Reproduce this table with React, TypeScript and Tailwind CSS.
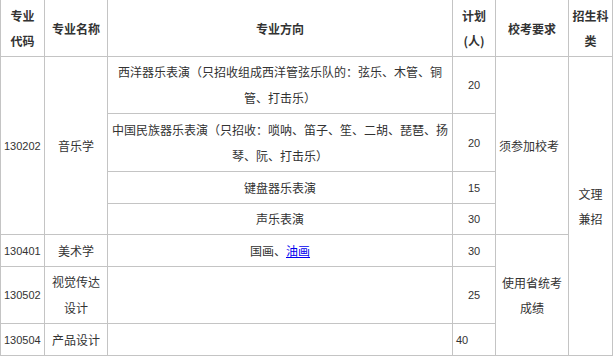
import React from 'react'

const cell = 'border border-[#c4c4c4] px-[3px] align-middle'
const num = "font-['Liberation_Sans','Noto_Sans_CJK_SC',sans-serif] text-[11px]"

const App = () => {
  return (
    <div className="w-[613px] h-[358px] overflow-hidden bg-white">
      <table className="-mt-px w-[612px] table-fixed border-collapse text-[12px] leading-[26px] text-[#333] font-['Noto_Sans_CJK_SC',sans-serif]">
        <colgroup>
          <col className="w-[44px]" />
          <col className="w-[63px]" />
          <col className="w-[345px]" />
          <col className="w-[43px]" />
          <col className="w-[73px]" />
          <col className="w-[44px]" />
        </colgroup>
        <tbody>
          <tr className="h-[57px] font-bold leading-[25px]">
            <td className={`${cell} text-center`}>
              专业
              <br />
              代码
            </td>
            <td className={`${cell} text-center`}>专业名称</td>
            <td className={`${cell} text-center`}>专业方向</td>
            <td className={`${cell} text-center`}>
              计划
              <br />
              (人)
            </td>
            <td className={`${cell} text-center`}>校考要求</td>
            <td className={`${cell} text-center`}>
              招生科
              <br />类
            </td>
          </tr>
          <tr className="h-[57px]">
            <td className={`${cell} ${num}`} rowSpan={4}>
              130202
            </td>
            <td className={`${cell} text-center`} rowSpan={4}>
              音乐学
            </td>
            <td className={`${cell} text-center`}>
              西洋器乐表演（只招收组成西洋管弦乐队的：弦乐、木管、铜管、打击乐）
            </td>
            <td className={`${cell} text-center ${num}`}>20</td>
            <td className={`${cell}`} rowSpan={4}>
              须参加校考
            </td>
            <td className={`${cell} text-center leading-[25px]`} rowSpan={7}>
              文理
              <br />
              兼招
            </td>
          </tr>
          <tr className="h-[58px]">
            <td className={`${cell} text-center`}>
              中国民族器乐表演（只招收：唢呐、笛子、笙、二胡、琵琶、扬琴、阮、打击乐）
            </td>
            <td className={`${cell} text-center ${num}`}>20</td>
          </tr>
          <tr className="h-[32px]">
            <td className={`${cell} text-center`}>键盘器乐表演</td>
            <td className={`${cell} text-center ${num}`}>15</td>
          </tr>
          <tr className="h-[31px]">
            <td className={`${cell} text-center`}>声乐表演</td>
            <td className={`${cell} text-center ${num}`}>30</td>
          </tr>
          <tr className="h-[32px]">
            <td className={`${cell} ${num}`}>130401</td>
            <td className={`${cell} text-center`}>美术学</td>
            <td className={`${cell} text-center`}>
              国画、
              <a className="text-[#0000ee] underline cursor-pointer">油画</a>
            </td>
            <td className={`${cell} text-center ${num}`}>30</td>
            <td className={`${cell} text-center leading-[25px]`} rowSpan={3}>
              使用省统考
              <br />
              成绩
            </td>
          </tr>
          <tr className="h-[57px]">
            <td className={`${cell} ${num}`}>130502</td>
            <td className={`${cell} text-center`}>
              视觉传达
              <br />
              设计
            </td>
            <td className={cell}></td>
            <td className={`${cell} text-center ${num}`}>25</td>
          </tr>
          <tr className="h-[32px]">
            <td className={`${cell} ${num}`}>130504</td>
            <td className={`${cell} text-center`}>产品设计</td>
            <td className={cell}></td>
            <td className={`${cell} ${num}`}>40</td>
          </tr>
        </tbody>
      </table>
    </div>
  )
}

export default App
